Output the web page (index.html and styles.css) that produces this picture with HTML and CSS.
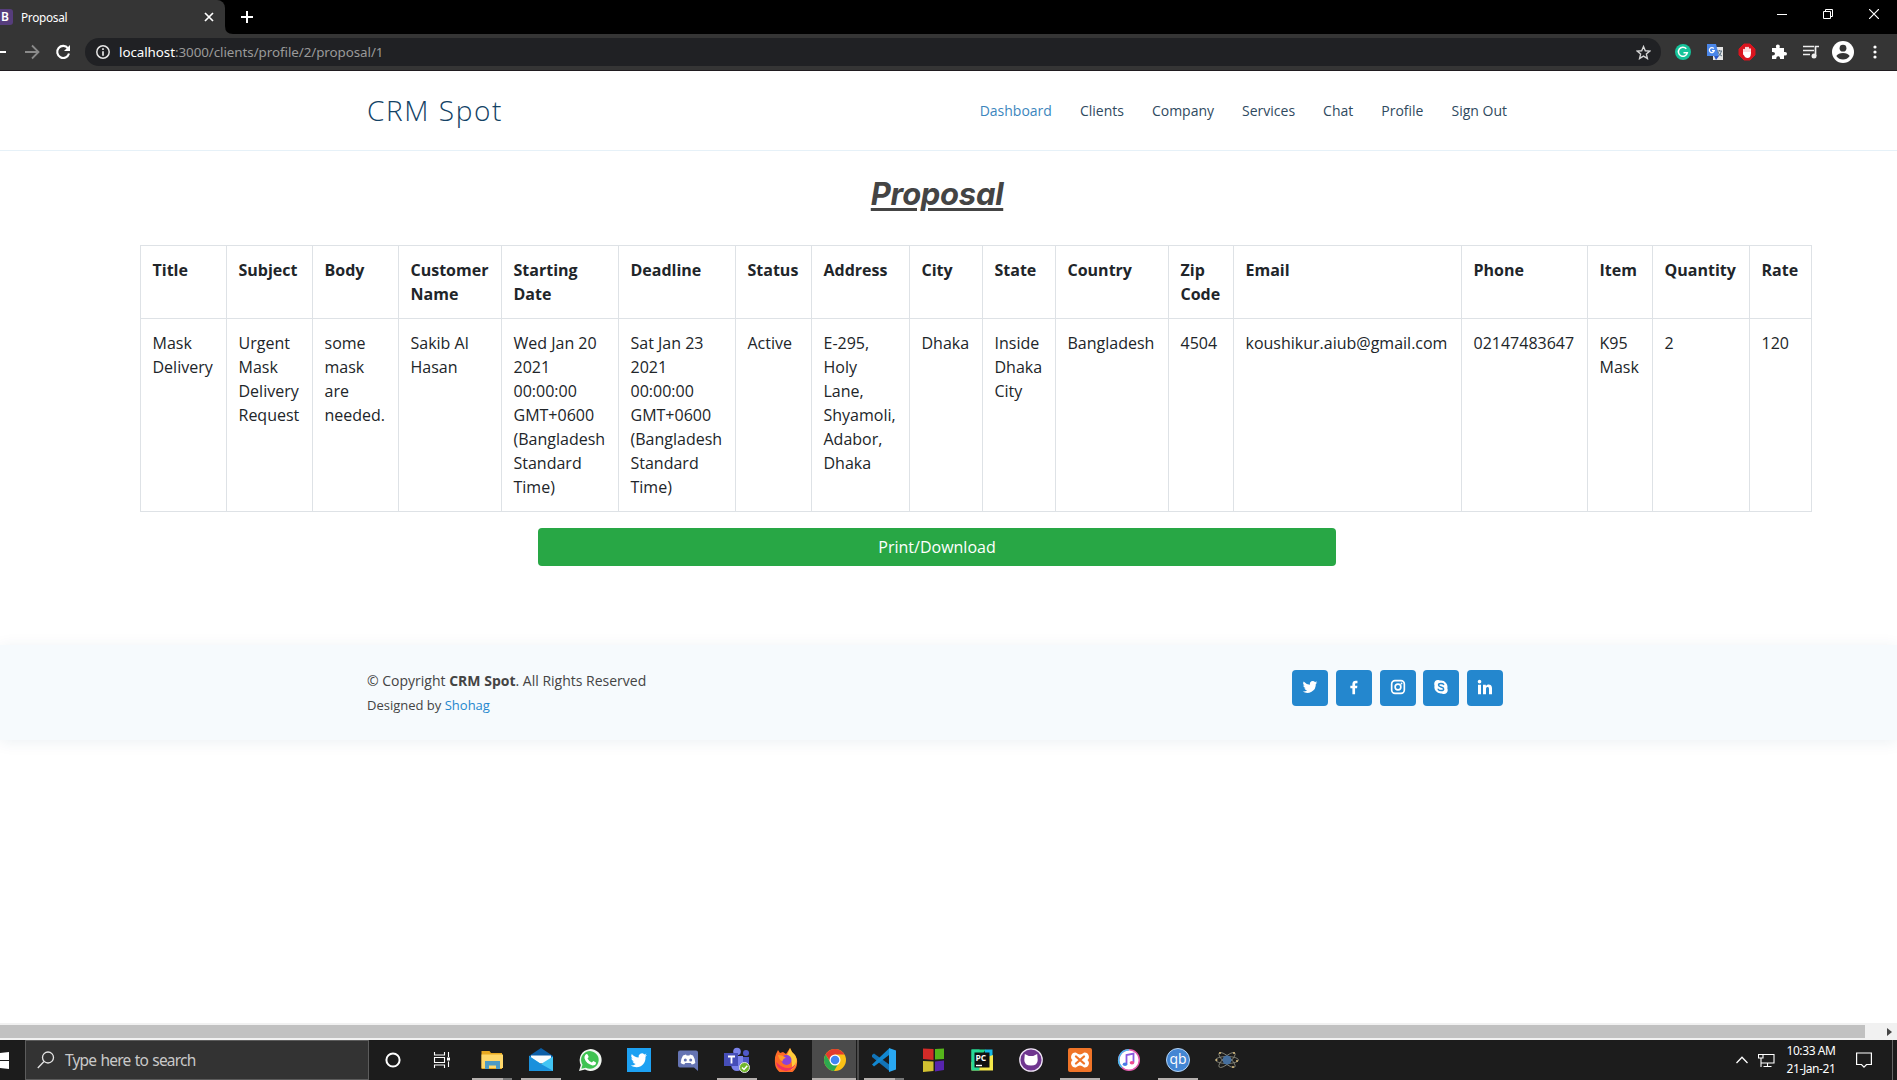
FILE: index.html
```html
<!DOCTYPE html>
<html lang="en">
<head>
<meta charset="utf-8">
<title>Proposal</title>
<link rel="stylesheet" href="styles.css">
</head>
<body>
<div class="tabstrip">
  <div class="tab">
    <span class="favicon">B</span><span class="tab-title">Proposal</span>
    <svg class="tab-close" width="10" height="10" viewBox="0 0 10 10"><path d="M1 1l8 8M9 1l-8 8" stroke="#fff" stroke-width="1.7"/></svg>
  </div>
  <svg class="tab-curve" width="8" height="34" viewBox="0 0 8 34"><path d="M0 26q0 8 8 8H0z" fill="#353535"/></svg>
  <svg class="new-tab" width="12" height="12" viewBox="0 0 12 12"><path d="M6 0v12M0 6h12" stroke="#fff" stroke-width="2"/></svg>
  <div class="window-buttons">
    <svg width="10" height="10" viewBox="0 0 10 10"><path d="M0 5.5h10" stroke="#fff"/></svg>
    <svg width="10" height="10" viewBox="0 0 10 10"><path d="M.5 2.5h7v7h-7zM2.5 2.500v-2h7v7h-2" fill="none" stroke="#fff"/></svg>
    <svg width="10" height="10" viewBox="0 0 10 10"><path d="M0 0l10 10M10 0L0 10" stroke="#fff" stroke-width="1.2"/></svg>
  </div>
</div>
<div class="toolbar">
  <svg class="nav-back" width="6" height="16" viewBox="0 0 6 16"><path d="M0 8h6" stroke="#fff" stroke-width="2"/></svg>
  <svg class="nav-forward" width="16" height="16" viewBox="0 0 16 16"><path d="M1 8h13M8 1.500l6.500 6.500L8 14.500" fill="none" stroke="#8a8a8a" stroke-width="1.800"/></svg>
  <svg class="nav-reload" width="16" height="16" viewBox="0 0 16 16"><path d="M13 4.300A6 6 0 1 0 14 9.500" fill="none" stroke="#fff" stroke-width="2.100"/><path d="M15 1v6H9z" fill="#fff"/></svg>
  <div class="address">
    <svg width="14" height="14" viewBox="0 0 14 14"><circle cx="7" cy="7" r="6.200" fill="none" stroke="#e6e6e6" stroke-width="1.500"/><path d="M7 3.200v1.800M7 6.200v4.600" stroke="#e6e6e6" stroke-width="1.700"/></svg>
    <span class="url"><b>localhost</b>:3000/clients/profile/2/proposal/1</span>
    <svg class="star" width="15" height="15" viewBox="0 0 24 24"><path d="M12 2.500l2.900 6.700 7.100.6-5.400 4.700 1.700 7L12 17.700l-6.300 3.800 1.700-7L2 9.800l7.100-.6z" fill="none" stroke="#d5d5d5" stroke-width="2.200"/></svg>
  </div>
  <div class="extensions">
    <svg width="22" height="22" viewBox="0 0 22 22"><circle cx="11" cy="11" r="8" fill="#15c39a"/><path d="M14.300 7.800a4.500 4.500 0 1 0 1 4h-3.800" fill="none" stroke="#fff" stroke-width="1.500"/></svg>
    <svg width="22" height="22" viewBox="0 0 22 22"><path d="M9 6h10v13H9z" fill="#e4e4e4"/><path d="M3 3h9l3 12H3z" fill="#4a86e8"/><path d="M9.800 7.500a2.500 2.500 0 1 0 .5 2.200H8" fill="none" stroke="#fff" stroke-width="1.200"/><path d="M13 10h5M15.500 9v1M17.500 10q-1 4-3 5M14 11q1 3 4 4" stroke="#5b7183" fill="none"/><path d="M10 15h5l-3 4z" fill="#2a56c6"/></svg>
    <svg width="22" height="22" viewBox="0 0 22 22"><path d="M8 3h6l5 5v6l-5 5H8l-5-5V8z" fill="#d9141e" stroke="#d9141e" stroke-linejoin="round"/><path d="M8 13V8.500M10 11V6.500M12 11V6.500M14 12V8" stroke="#fff" stroke-width="1.700" stroke-linecap="round"/><path d="M7.200 11h7.600v2q0 4-3.300 4-2.500 0-4-3.500z" fill="#fff"/></svg>
    <svg width="22" height="22" viewBox="0 0 22 22"><path d="M4 7h4.300q-1.300-3.500 1.500-3.500T11.500 7H16v4q3-.6 3 1.700T16 14.500V18h-4q.4-2.800-1.800-2.800T8.300 18H4v-3.600q3 .3 3-1.700t-3-1.600z" fill="#fff"/></svg>
    <svg width="22" height="22" viewBox="0 0 22 22"><path d="M3 5.500h11M3 9.500h11M3 13.500h7M15.500 15V5.500H19" fill="none" stroke="#eee" stroke-width="1.700"/><circle cx="14" cy="15" r="2.500" fill="#eee"/></svg>
    <svg width="22" height="22" viewBox="0 0 22 22"><circle cx="11" cy="11" r="11" fill="#fff"/><circle cx="11" cy="7.200" r="3.400" fill="#353535"/><path d="M4.300 15q2-3 6.700-3t6.700 3q-2.500 3.500-6.700 3.500T4.300 15z" fill="#353535"/></svg>
    <svg width="22" height="22" viewBox="0 0 22 22"><g fill="#fff"><circle cx="11" cy="6" r="1.600"/><circle cx="11" cy="11" r="1.600"/><circle cx="11" cy="16" r="1.600"/></g></svg>
  </div>
</div>
<div class="viewport">
  <header class="site-header">
    <div class="container header-row">
      <div class="logo">CRM Spot</div>
      <nav><a class="active">Dashboard</a><a>Clients</a><a>Company</a><a>Services</a><a>Chat</a><a>Profile</a><a>Sign Out</a></nav>
    </div>
  </header>
  <main>
    <h1><span>Proposal</span></h1>
    <table>
      <colgroup><col class="w86"><col class="w86"><col class="w86"><col class="w103"><col class="w117"><col class="w117"><col class="w76"><col class="w98"><col class="w73"><col class="w73"><col class="w113"><col class="w65"><col class="w228"><col class="w126"><col class="w65"><col class="w97"><col class="w62"></colgroup>
      <tr><th>Title</th><th>Subject</th><th>Body</th><th>Customer Name</th><th>Starting Date</th><th>Deadline</th><th>Status</th><th>Address</th><th>City</th><th>State</th><th>Country</th><th>Zip Code</th><th>Email</th><th>Phone</th><th>Item</th><th>Quantity</th><th>Rate</th></tr>
      <tr><td>Mask Delivery</td><td>Urgent Mask Delivery Request</td><td>some mask are needed.</td><td>Sakib Al Hasan</td><td>Wed Jan 20 2021 00:00:00 GMT+0600 (Bangladesh Standard Time)</td><td>Sat Jan 23 2021 00:00:00 GMT+0600 (Bangladesh Standard Time)</td><td>Active</td><td>E-295, Holy Lane, Shyamoli, Adabor, Dhaka</td><td>Dhaka</td><td>Inside Dhaka City</td><td>Bangladesh</td><td>4504</td><td>koushikur.aiub@gmail.com</td><td>02147483647</td><td>K95 Mask</td><td>2</td><td>120</td></tr>
    </table>
    <button class="print">Print/Download</button>
  </main>
  <footer>
    <div class="container footer-row">
      <div>
        <div class="copyright">© Copyright <b>CRM Spot</b>. All Rights Reserved</div>
        <div class="credits">Designed by <a>Shohag</a></div>
      </div>
      <div class="social">
        <a><svg viewBox="0 0 24 24"><path d="M23 5.100a9 9 0 0 1-2.600.7 4.500 4.500 0 0 0 2-2.500 9 9 0 0 1-2.900 1.100 4.500 4.500 0 0 0-7.700 4.100A12.800 12.800 0 0 1 2.500 3.800a4.500 4.500 0 0 0 1.400 6 4.500 4.500 0 0 1-2-.6 4.500 4.500 0 0 0 3.600 4.500 4.500 4.500 0 0 1-2 .1 4.500 4.500 0 0 0 4.200 3.100A9 9 0 0 1 1 18.800 12.800 12.800 0 0 0 20.700 7.400 9 9 0 0 0 23 5.100z" fill="#fff"/></svg></a>
        <a><svg viewBox="0 0 24 24"><path d="M13.600 23v-9h3l.5-3.700h-3.500V8.200c0-1.100.5-1.700 1.900-1.700h1.700V2.700A20 20 0 0 0 14.600 2.500C11.500 2.500 9.600 4.300 9.600 7.500v2.800H6.500V14h3.100v9z" fill="#fff"/></svg></a>
        <a><svg viewBox="0 0 24 24"><g fill="none" stroke="#fff"><rect x="2.500" y="2.500" width="19" height="19" rx="5" stroke-width="2.500"/><circle cx="12" cy="12" r="4.300" stroke-width="2.500"/></g><circle cx="17.300" cy="6.700" r="1.400" fill="#fff"/></svg></a>
        <a><svg viewBox="0 0 24 24"><path d="M7 1.500c2 0 3 .9 5 .9a9.500 9.500 0 0 1 9.500 11.500C23.500 19 20 22.500 16.500 22.500c-2 0-3-.9-5-.9A9.500 9.500 0 0 1 2.300 10C.7 5 3.500 1.500 7 1.500z" fill="#fff"/><path d="M16 8.300C15 6.400 8.300 5.800 8.300 9c0 3.800 7.700 2 7.700 6 0 3.300-7 3-8.200.3" fill="none" stroke="#2487ce" stroke-width="2.200" stroke-linecap="round"/></svg></a>
        <a><svg viewBox="0 0 24 24"><path d="M1.500 8.500h4.500V23H1.500zM9 8.500h4.300v2c1.800-3.500 9.200-3.500 9.200 3V23H18v-8c0-4-4.500-3.500-4.500 0v8H9z" fill="#fff"/><circle cx="3.800" cy="4" r="2.700" fill="#fff"/></svg></a>
      </div>
    </div>
  </footer>
</div>
<div class="scrollbar"><div class="thumb"></div><svg width="6" height="8" viewBox="0 0 6 8"><path d="M0 0l5 4-5 4z" fill="#444"/></svg></div>
<div class="taskbar">
  <div class="start"><svg width="9" height="17" viewBox="0 0 9 17"><path d="M0 1l9-1v8H0zM0 9h9v8l-9-1z" fill="#fff"/></svg></div>
  <div class="search"><svg width="18" height="18" viewBox="0 0 18 18"><circle cx="11" cy="6.500" r="5.500" fill="none" stroke="#e4e4e4" stroke-width="1.300"/><path d="M7 10.500L.8 17" stroke="#e4e4e4" stroke-width="1.300"/></svg><span>Type here to search</span></div>
  <div class="task"><svg width="24" height="24" viewBox="0 0 24 24"><circle cx="12" cy="12" r="6.600" fill="none" stroke="#fff" stroke-width="2"/></svg></div>
  <div class="task"><svg width="24" height="24" viewBox="0 0 24 24"><path d="M4.500 4v3h10V4M4.500 9.500h10v5h-10zM4.500 20v-3h10v3M18.500 4v5M18.500 13.500V19" fill="none" stroke="#fff" stroke-width="1.100"/><path d="M17 9.500h3v3h-3z" fill="#fff"/></svg></div>
  <div class="task open stacked first-app"><svg width="24" height="24" viewBox="0 0 24 24"><path d="M1.500 3h8l1.500 2H22v16H1.500z" fill="#e8a922"/><path d="M1.500 6.500H23V20H1.500z" fill="#ffd86b"/><path d="M5 21v-8h15v8h-4v-3.500H9V21z" fill="#4d9bc4"/></svg></div>
  <div class="task open"><svg width="24" height="24" viewBox="0 0 24 24"><path d="M0 8l12-8 12 8v5H0z" fill="#0a5ea7"/><path d="M2 7.500h20v8H2z" fill="#f7fbfd"/><path d="M0 8l12 8 12-7.500V23H0z" fill="#42c5f4"/><path d="M0 8v15l24-.2L12 16z" fill="#1a90dc"/></svg></div>
  <div class="task"><svg width="24" height="24" viewBox="0 0 24 24"><path d="M1 23l1.800-6A11 11 0 1 1 7 21.500z" fill="#f1f6f0"/><path d="M3.300 20.700l1.200-4a8.800 8.800 0 1 1 3.300 3z" fill="#3fc351"/><path d="M7.300 7q1.500-2 2.600.1l.8 2-1.200 1.500q1.500 3 4.300 4l1.500-1.500 2.700 1.400q.2 3-3.500 3-6.500-1.700-8-7.200-.3-2 .8-3.300z" fill="#fff"/></svg></div>
  <div class="task"><svg width="24" height="24" viewBox="0 0 24 24"><path d="M0 0h24v24H0z" fill="#1da1f2"/><path d="M20 6.900l-2 .6 1.500-2-2.200.9a3.400 3.400 0 0 0-5.700 3.100Q7.500 9.300 4.800 6q-1.500 3 1 4.600l-1.500-.4q.2 2.500 2.700 3.400H5.500q1 2.300 3.200 2.400Q6.500 17.700 3.700 17.500C11.500 22 19 17 18.500 8.700z" fill="#fff"/></svg></div>
  <div class="task"><svg width="24" height="24" viewBox="0 0 24 24"><path d="M4 2.500h16q2 0 2 2V23l-4-3.500H4q-2 0-2-2v-13q0-2 2-2z" fill="#6574b3"/><path d="M7 7.500l3-1 .6 1h2.800l.6-1 3 1q2.500 4 2.300 7.500-1.500 1.300-3.500 1.500l-1-1.500H9.200l-1 1.500q-2-.2-3.500-1.500Q4.500 11.500 7 7.500z" fill="#fff"/><circle cx="9.300" cy="12" r="1.500" fill="#6574b3"/><circle cx="14.700" cy="12" r="1.500" fill="#6574b3"/></svg></div>
  <div class="task open"><svg width="26" height="26" viewBox="0 0 26 26"><circle cx="13" cy="4.500" r="3.800" fill="#7b83eb"/><circle cx="22" cy="6" r="3" fill="#5059c9"/><path d="M16 10h9v6q-1 5-5 4z" fill="#5059c9"/><path d="M8 9h11v9q-1 6-6 6t-6-6z" fill="#7b83eb"/><path d="M0 6h14v13H0z" fill="#464eb8"/><path d="M4 9.500h7M7.500 9.500v7" stroke="#fff" stroke-width="1.800"/><circle cx="20.500" cy="20.500" r="5" fill="#71b72b" stroke="#e4e4e4"/><path d="M18 20.500l2 2 3.300-3.700" fill="none" stroke="#fff" stroke-width="1.500"/></svg></div>
  <div class="task"><svg width="24" height="24" viewBox="0 0 24 24"><path d="M2 6l2-4 2 3 3-1 3 2 4-6 2 4q6 5 5 11a11 11 0 0 1-22 0Q.5 9 2 6z" fill="#ff6a27"/><path d="M16 0l2 4q6 5 4.500 11-1 5-5.500 7 3.500-8-4-15z" fill="#ffcc3b"/><path d="M2 14q1 8 10 9 9-1 10-9-2 6-8 6T2 14z" fill="#f0315f"/><circle cx="12.500" cy="12" r="5" fill="#8a42d8"/><path d="M4 7q5 0 8 3-3 0-3.500 3.500Q5 12 4 7z" fill="#ff9c28"/></svg></div>
  <div class="task open current"><svg width="24" height="24" viewBox="0 0 24 24"><circle cx="12" cy="12" r="11" fill="#fbc116"/><path d="M2.500 6.500A11 11 0 0 1 21.500 6.500H12L7.500 14z" fill="#e33b2e"/><path d="M2.500 6.500A11 11 0 0 0 11 23l5-8.500L12 17l-4.500-2.500z" fill="#2da94f"/><circle cx="12" cy="12" r="5.500" fill="#fff"/><circle cx="12" cy="12" r="4.300" fill="#4285f4"/></svg></div>
  <div class="task open stacked"><svg width="24" height="24" viewBox="0 0 24 24"><path d="M0 7l2-1.500L18 17v6.500L0 9z" fill="#1274b8"/><path d="M0 16.500L17 .5V7L2 18.500z" fill="#1287d0"/><path d="M17 0l7 2.500v19L17 24z" fill="#29a8f3"/></svg></div>
  <div class="task"><svg width="24" height="24" viewBox="0 0 24 24"><path d="M2 .5L12.500 1v11L2 11z" fill="#d32b28"/><path d="M14 1l9-.5V11l-9 .5z" fill="#56b51b"/><path d="M2 13l10.500.5V23L2 24z" fill="#d2c031"/><path d="M14 13.500l9-1V22l-9 1.500z" fill="#5724ad"/></svg></div>
  <div class="task"><svg width="24" height="24" viewBox="0 0 24 24"><path d="M1.500 1.500h14l-6 10-8 10z" fill="#21d789"/><path d="M15 1.500h7.500V13l-8 2z" fill="#14b7e6"/><path d="M1.500 22.500V14L23 7v15.500z" fill="#f4e84a"/><path d="M1.500 1.500h8v21h-8z" fill="#28d897"/><path d="M4.500 4.500h15v15h-15z" fill="#101010"/><path d="M6 17.500h6" stroke="#fff" stroke-width="1.400"/><text x="5.500" y="12.500" class="pc">PC</text></svg></div>
  <div class="task"><svg width="24" height="24" viewBox="0 0 24 24"><circle cx="12" cy="12" r="11.200" fill="#6f368f" stroke="#eee3f4" stroke-width="1.300"/><path d="M5.800 6l4 2h4.400l4-2 .5 6q0 5.500-6.700 5.500T5.300 12z" fill="#fff"/></svg></div>
  <div class="task open"><svg width="24" height="24" viewBox="0 0 24 24"><rect width="24" height="24" rx="2" fill="#f07428"/><path d="M7.500 5.500Q12 9.500 16.500 5.500A3.300 3.300 0 0 1 18.500 11.500V12.500A3.300 3.300 0 0 1 16.500 18.500Q12 14.500 7.500 18.500A3.300 3.300 0 0 1 5.500 12.500V11.500A3.300 3.300 0 0 1 7.500 5.500z" fill="#fff" stroke="#fff" stroke-width="2" stroke-linejoin="round"/><path d="M8 8.500l8 7M16 8.500l-8 7" stroke="#f07428" stroke-width="2.300" stroke-linecap="round"/></svg></div>
  <div class="task"><svg width="24" height="24" viewBox="0 0 24 24"><circle cx="12" cy="12" r="10.300" fill="#fff" stroke="#e45bae" stroke-width="1.500"/><path d="M12 1.700A10.300 10.300 0 0 0 5 19.500" fill="none" stroke="#48bdf0" stroke-width="1.500"/><path d="M9.500 16V7l7-1.500v9" fill="none" stroke="#8a58df" stroke-width="1.800"/><ellipse cx="8" cy="16.300" rx="2.300" ry="1.800" fill="#477be7"/><ellipse cx="15" cy="14.800" rx="2.300" ry="1.800" fill="#ef4b8f"/></svg></div>
  <div class="task open"><svg width="24" height="24" viewBox="0 0 24 24"><circle cx="12" cy="12" r="11.500" fill="#4386d3" stroke="#b6d5f6"/><text x="12" y="16" class="qb">qb</text></svg></div>
  <div class="task"><svg width="24" height="24" viewBox="0 0 24 24"><g fill="none" stroke="#858578" stroke-width=".9"><ellipse cx="12" cy="12" rx="11.500" ry="3.500"/><ellipse cx="12" cy="12" rx="10.500" ry="3.500" transform="rotate(42 12 12)"/><ellipse cx="12" cy="12" rx="10.500" ry="3.500" transform="rotate(-42 12 12)"/></g><circle cx="12" cy="12" r="4.500" fill="#456f9e"/><g fill="#d8bd7c"><circle cx="5" cy="5" r="1"/><circle cx="19" cy="5" r="1"/><circle cx="1.500" cy="12" r="1"/><circle cx="22" cy="13" r="1"/><circle cx="18" cy="19" r="1"/></g></svg></div>
  <div class="tray">
    <svg width="12" height="8" viewBox="0 0 12 8"><path d="M.5 7L6 1.300 11.500 7" fill="none" stroke="#fff" stroke-width="1.300"/></svg>
    <svg class="net" width="17" height="15" viewBox="0 0 17 15"><path d="M5 1.500h11v8.500H3V6M.5 1.500H5V5H.5zM9.500 10v3M5.500 13.500h8M3 5v9" fill="none" stroke="#fff" stroke-width="1.100"/></svg>
    <div class="clock"><span>10:33 AM</span><span>21-Jan-21</span></div>
    <svg class="notes" width="16" height="17" viewBox="0 0 16 17"><path d="M.6 1h14.800v11.500H10.500L8 15.200 5.500 12.500H.6z" fill="none" stroke="#fff" stroke-width="1.200"/></svg>
    <div class="peek"></div>
  </div>
</div>
</body>
</html>
```
FILE: styles.css
```css
* { box-sizing: border-box; }
body { margin: 0; height: 1080px; overflow: hidden; display: flex; flex-direction: column; background: #fff; font-family: "Open Sans", sans-serif; color: #444; }
svg { display: block; flex: none; }

.tabstrip { flex: none; height: 34px; background: #000; display: flex; align-items: center; }
.tab { width: 225px; height: 34px; background: #353535; border-radius: 0 8px 0 0; display: flex; align-items: center; color: #fff; font: 12px "Noto Sans", sans-serif; }
.favicon { width: 13px; height: 16px; background: #563d7c; border-radius: 0 3px 3px 0; font-size: 12px; font-weight: 600; line-height: 16px; padding-left: 1px; }
.tab-title { margin-left: 8px; font-size: 11.800px; letter-spacing: -.3px; flex: 1; }
.tab-close { margin-right: 11px; }
.new-tab { margin-left: 8px; }
.window-buttons { display: flex; gap: 36px; margin: -6px 18px 0 auto; }

.toolbar { flex: none; height: 37px; background: #353535; border-bottom: 1px solid #201c20; display: flex; align-items: center; }
.nav-forward { margin-left: 18px; }
.nav-reload { margin-left: 15px; }
.address { margin-left: 14px; width: 1576px; height: 28px; border-radius: 14px; background: #202124; display: flex; align-items: center; padding: 0 10px 0 11px; }
.url { flex: 1; margin-left: 9px; color: #9a9a9a; font: 13.400px "Noto Sans", sans-serif; letter-spacing: -.07px; }
.url b { font-weight: 400; color: #fff; }
.extensions { display: flex; gap: 10px; margin-left: 11px; }

.viewport { flex: 1; min-height: 0; }
.container { width: 1140px; margin-left: 367px; display: flex; justify-content: space-between; }
.site-header { height: 80px; border-bottom: 1px solid #e6f1f8; }
.header-row { height: 79px; align-items: center; }
.logo { font: 300 28px/36px "Open Sans", sans-serif; letter-spacing: 1.600px; margin-top: -1px; color: #124265; }
nav { display: flex; gap: 28px; font-size: 14px; color: #2f4a60; }
nav .active { color: #3c86bd; }

main { display: flex; flex-direction: column; }
h1 { margin: 21px 0 0 840px; width: 194px; height: 73px; text-align: center; font: italic 700 31px/44px "Inter", sans-serif; letter-spacing: -.3px; }
h1 span { text-decoration: underline; text-decoration-thickness: 2.500px; text-underline-offset: 3px; }
table { margin-left: 140px; width: 1672px; table-layout: fixed; border-collapse: collapse; font-size: 16px; line-height: 24px; color: #212529; }
th, td { border: 1px solid #dee2e6; padding: 12px 0 12px 11.500px; text-align: left; vertical-align: top; }
td { padding-right: 11px; }
th { font-weight: 700; }
.w86 { width: 86px; } .w103 { width: 103px; } .w117 { width: 117px; } .w76 { width: 76px; }
.w98 { width: 98px; } .w73 { width: 73px; } .w113 { width: 113px; } .w65 { width: 65px; }
.w228 { width: 228px; } .w126 { width: 126px; } .w97 { width: 97px; } .w62 { width: 62px; }
.print { margin: 16px 0 0 538px; width: 798px; height: 38px; border: 0; border-radius: 4px; background: #28a745; color: #fff; font: 16px "Open Sans", sans-serif; }

footer { margin-top: 79px; height: 95px; padding-top: 25px; background: #f6fafd; box-shadow: 0 2px 15px rgba(18, 66, 101, .08); }
.copyright { font-size: 14px; line-height: 22px; }
.credits { font-size: 13px; line-height: 20px; padding-top: 3px; }
.credits a { color: #2487ce; }
.social { display: flex; gap: 7.800px; margin-right: 3.800px; }
.social a { width: 36px; height: 36px; border-radius: 4px; background: #2487ce; display: grid; place-items: center; }
.social svg { width: 16px; height: 16px; margin-top: -2px; }

.scrollbar { flex: none; height: 17px; background: #f1f1f1; display: flex; align-items: center; }
.thumb { width: 1865px; height: 13px; background: #c1c1c1; margin-right: 22px; }

.taskbar { flex: none; height: 40px; background: #1c1c1c; display: flex; color: #fff; }
.start { width: 25px; display: flex; align-items: center; }
.search { width: 344px; background: #333; border: 1px solid #5c5c5c; display: flex; align-items: center; gap: 10px; padding-left: 11px; color: #c9c9c9; font: 15.500px "Noto Sans", sans-serif; word-spacing: 1px; letter-spacing: -.8px; }
.task { width: 49px; display: grid; place-items: center; border-bottom: 2px solid transparent; padding-top: 2px; }
.search + .task { width: 48px; }
.first-app { margin-left: 1px; }
.open { border: 0; padding: 0; background: linear-gradient(#b5b0ae, #b5b0ae) 5px 38px / 40px 2px no-repeat; }
.stacked { background: linear-gradient(90deg, #b5b0ae 31px, #777 31px) 5px 38px / 40px 2px no-repeat; }
.current { background: linear-gradient(#b5b0ae, #b5b0ae) 2px 38px / 44px 2px no-repeat, linear-gradient(90deg, transparent 2px, #4b4b4b 2px 46px, #1c1c1c 46px 47px, #4b4b4b 47px); }
.pc { font: 700 8.500px "Open Sans", sans-serif; fill: #fff; }
.qb { font: 14px "Open Sans", sans-serif; fill: #fff; text-anchor: middle; }
.tray { margin-left: auto; display: flex; align-items: center; }
.net { margin-left: 10px; }
.clock { margin-left: 8px; width: 56px; display: flex; flex-direction: column; align-items: center; font: 12px/18px "Noto Sans", sans-serif; letter-spacing: -.4px; white-space: nowrap; }
.notes { margin-left: 17px; }
.peek { width: 5px; height: 40px; margin-left: 20px; border-left: 1px solid #666; }
```
